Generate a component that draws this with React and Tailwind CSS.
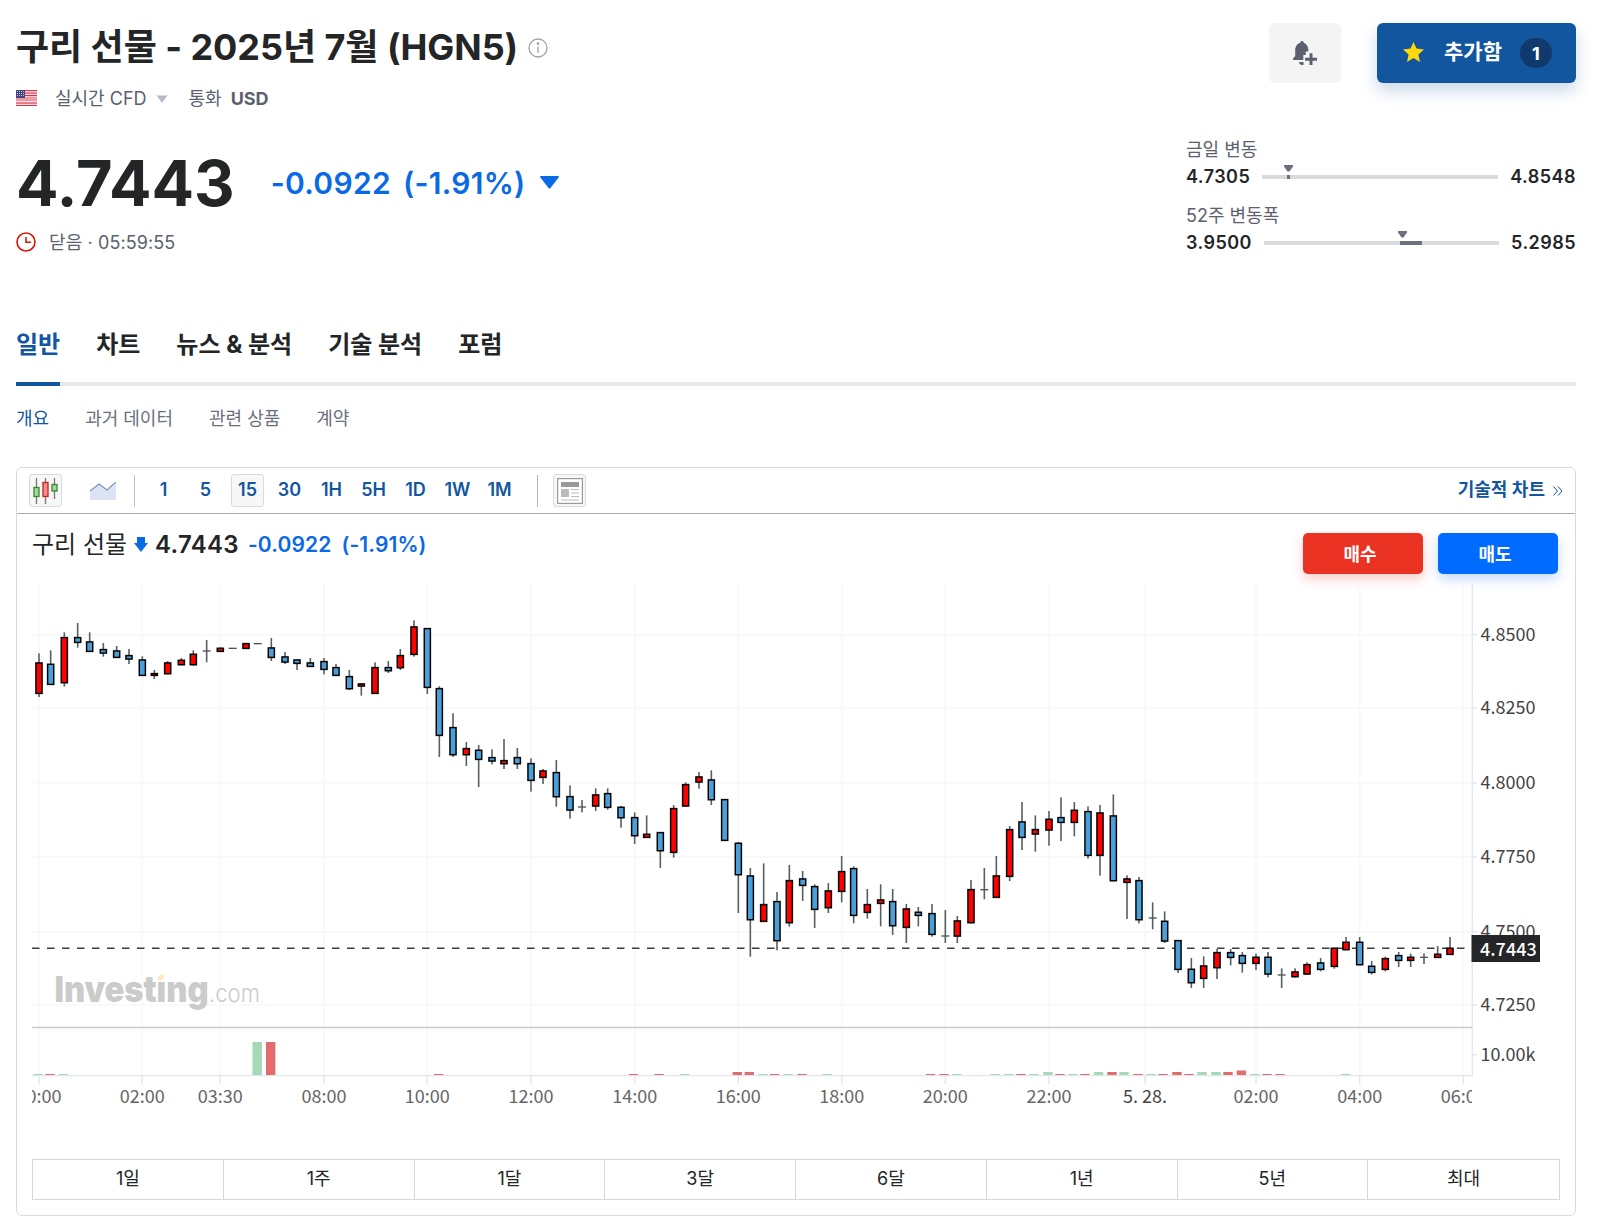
import React from "react";
import clsx from "clsx";

const TABS = ["일반", "차트", "뉴스 & 분석", "기술 분석", "포럼"];
const SUB_TABS = ["개요", "과거 데이터", "관련 상품", "계약"];
const INTERVALS = ["1", "5", "15", "30", "1H", "5H", "1D", "1W", "1M"];
const RANGES = ["1일", "1주", "1달", "3달", "6달", "1년", "5년", "최대"];

// === CHART DATA ===
// each candle: [x, high, bodyTop, bodyBottom, low, up], in thirds of a pixel
// relative to the dx / dy of its segment. bodyBottom null = doji
const SEGMENTS = [
  {
    dx: 60,
    dy: 1800,
    candles: [
      [57, 160, 187, 282, 291, 1], [92, 151, 191, 255, 255, 0], [133, 97, 111, 250, 260, 1],
      [173, 69, 111, 129, 143, 0], [209, 97, 124, 156, 156, 0], [250, 129, 147, 161, 170, 0],
      [290, 138, 151, 174, 174, 0], [327, 147, 165, 179, 192, 0], [367, 169, 178, 228, 228, 0],
      [403, 210, 219, 228, 237, 1], [443, 183, 187, 223, 223, 1], [484, 174, 179, 196, 196, 1],
      [520, 151, 161, 196, 197, 1], [560, 120, 153, null, 187, 1], [601, 142, 143, 156, 156, 1],
      [638, 145, 145, null, 145, 1], [678, 129, 129, 147, 147, 1], [713, 131, 131, null, 131, 1],
      [754, 114, 142, 174, 183, 0], [795, 156, 169, 188, 192, 0],
    ],
  },
  {
    dx: 840,
    dy: 1800,
    candles: [
      [51, 178, 178, 192, 210, 0], [91, 174, 187, 201, 201, 0], [132, 174, 183, 210, 223, 0],
      [168, 192, 201, 228, 228, 0], [208, 210, 228, 268, 270, 0], [244, 250, 250, 260, 287, 1],
      [285, 187, 201, 282, 282, 1], [325, 183, 201, 214, 219, 0], [361, 147, 165, 205, 210, 1],
      [402, 61, 79, 165, 170, 1], [442, 84, 84, 264, 282, 0], [478, 259, 264, 408, 471, 0],
      [519, 340, 381, 466, 471, 0], [559, 426, 444, 466, 498, 1], [596, 435, 449, 480, 561, 0],
      [636, 448, 471, 485, 493, 0], [672, 417, 480, 493, 507, 1], [712, 444, 471, 493, 507, 0],
      [753, 475, 489, 543, 575, 0], [789, 507, 511, 534, 552, 1],
    ],
  },
  {
    dx: 1620,
    dy: 2160,
    candles: [
      [49, 120, 156, 232, 260, 0], [90, 196, 228, 272, 296, 0], [126, 240, 261, null, 277, 1],
      [167, 205, 223, 260, 273, 1], [203, 205, 219, 264, 269, 0], [243, 258, 260, 295, 323, 0],
      [284, 277, 291, 349, 372, 0], [320, 286, 341, 354, 354, 1], [361, 336, 336, 394, 444, 0],
      [401, 255, 264, 399, 413, 1], [437, 187, 192, 260, 260, 1], [477, 156, 169, 188, 206, 1],
      [514, 151, 178, 241, 255, 0], [554, 237, 237, 363, 363, 0], [595, 366, 368, 466, 579, 0],
      [631, 444, 466, 601, 710, 0], [671, 430, 552, 606, 606, 1], [711, 516, 543, 664, 691, 0],
      [748, 435, 480, 610, 620, 1], [788, 453, 475, 498, 543, 0], [824, 493, 498, 570, 624, 0],
    ],
  },
  {
    dx: 2400,
    dy: 2280,
    candles: [
      [85, 369, 391, 445, 459, 1], [125, 288, 333, 396, 427, 1], [161, 319, 324, 468, 490, 0],
      [202, 387, 432, 459, 476, 1], [242, 373, 418, 432, 499, 1], [278, 387, 423, 499, 525, 0],
      [319, 432, 445, 504, 549, 1], [355, 441, 455, 468, 499, 0], [396, 432, 459, 525, 530, 0],
      [436, 450, 528, null, 549, 1], [472, 468, 481, 530, 549, 1], [513, 360, 387, 490, 490, 1],
      [553, 324, 389, null, 418, 1], [589, 288, 346, 414, 414, 1], [629, 198, 207, 351, 363, 1],
      [666, 126, 184, 234, 270, 0], [706, 166, 207, 224, 275, 1], [747, 153, 176, 212, 257, 1],
      [783, 112, 171, 189, 243, 0], [823, 126, 149, 189, 229, 1],
    ],
  },
  {
    dx: 3180,
    dy: 2340,
    candles: [
      [84, 79, 93, 228, 236, 0], [120, 75, 97, 228, 287, 1], [160, 43, 106, 304, 304, 0],
      [201, 286, 295, 309, 417, 1], [237, 291, 300, 421, 430, 0], [278, 367, 414, null, 448, 1],
      [314, 394, 422, 485, 489, 0], [354, 480, 480, 570, 579, 0], [394, 534, 566, 610, 624, 0],
      [431, 529, 556, 597, 624, 1], [471, 507, 516, 565, 597, 1], [512, 507, 516, 534, 556, 0],
      [547, 516, 525, 552, 578, 0], [588, 521, 530, 552, 570, 1], [624, 516, 530, 584, 592, 0],
      [665, 565, 585, null, 624, 1], [705, 565, 574, 592, 592, 1], [741, 547, 552, 584, 584, 1],
      [782, 534, 547, 570, 574, 0], [823, 502, 503, 561, 566, 1],
    ],
  },
  {
    dx: 3960,
    dy: 2700,
    candles: [
      [78, 111, 125, 151, 151, 1], [119, 111, 125, 196, 196, 0], [155, 183, 197, 219, 223, 0],
      [196, 170, 174, 210, 214, 1], [236, 156, 165, 183, 201, 0], [272, 161, 170, 183, 201, 1],
      [312, 160, 172, null, 192, 1], [353, 138, 161, 174, 174, 1], [390, 111, 143, 165, 165, 1],
    ],
  },
];

// [center x, height, up]
const VOLUMES = [
  [38, 1, 1], [50, 1, 0], [63.5, 1, 1], [257.2, 33, 1], [270.7, 33, 0], [438.7, 1, 0],
  [633.5, 1, 0], [659, 1, 0], [684.5, 1, 1], [737.3, 3, 0], [749.3, 3, 0], [763, 1, 1],
  [774.5, 1, 0], [788, 1, 1], [802, 1, 0], [827, 1, 1], [930.5, 1, 0], [944, 1, 0],
  [956.7, 1, 1], [995, 1, 1], [1008.6, 1, 1], [1021, 1, 0], [1034, 1, 1], [1048, 3, 1],
  [1060, 1, 0], [1073, 1, 1], [1085, 1, 0], [1098.6, 3, 1], [1112, 3, 0], [1124, 3, 1],
  [1138, 1, 0], [1151, 1, 1], [1163, 1, 0], [1177, 3, 0], [1189, 1, 0], [1202, 3, 1],
  [1216, 3, 1], [1228, 3, 0], [1241.4, 4.5, 0], [1255, 1, 1], [1267, 1, 0], [1280, 1, 0],
  [1345.5, 1, 1],
];

const X_TICKS = [
  [39, "00:00"], [142.3, "02:00"], [220.3, "03:30"], [324, "08:00"], [427.3, "10:00"],
  [531, "12:00"], [634.7, "14:00"], [738.3, "16:00"], [841.7, "18:00"], [945.3, "20:00"],
  [1049, "22:00"], [1145, "5. 28."], [1256, "02:00"], [1359.7, "04:00"], [1463.3, "06:00"],
];

const Y_TICKS = [
  [634.7, "4.8500"], [708, "4.8250"], [783, "4.8000"],
  [856.7, "4.7750"], [931.7, "4.7500"], [1005, "4.7250"],
];

const Candle = ({ data }) => {
  const [x, high, top, bottom, low, up] = data;
  return (
    <g>
      {low > high && <rect x={x - 2.4} y={high} width="4.8" height={low - high} fill="#556163" />}
      {bottom === null ? (
        <rect x={x - 12} y={top - 2} width="24" height="4" fill="#4a5557" />
      ) : (
        <rect
          x={x - 9.2}
          y={top + 1.8}
          width="18.4"
          height={Math.max(bottom - top - 3.6, 4)}
          fill={up ? "#ff0000" : "#4a9fd8"}
          stroke="#000"
          strokeWidth="4.4"
        />
      )}
    </g>
  );
};

const PriceChart = () => (
  <svg
    width="1528"
    height="530"
    viewBox="32 583 1528 530"
    className="block font-['Noto_Sans_CJK_KR',sans-serif] text-[18px]"
  >
    <defs>
      <clipPath id="plot">
        <rect x="32" y="583" width="1440" height="530" />
      </clipPath>
    </defs>

    {/* grid */}
    <g stroke="#f8f8f8" strokeWidth="1.6">
      {X_TICKS.map(([x], i) => (
        <line key={i} x1={x} x2={x} y1="583" y2="1075" />
      ))}
      {Y_TICKS.map(([y]) => (
        <line key={y} x1="32" x2="1472" y1={y} y2={y} />
      ))}
    </g>

    {/* watermark */}
    <g fill="#cbcbcb" className="font-['Inter',sans-serif]">
      <text x="54.5" y="1002" textLength="154" lengthAdjust="spacingAndGlyphs" className="text-[36px] font-black">
        Investıng
      </text>
      <path d="M158 976l6-2v5l-6 2z" fill="#ffe9c2" />
      <text x="209" y="1002" textLength="51" lengthAdjust="spacingAndGlyphs" className="text-[25px] font-light">
        .com
      </text>
    </g>

    {/* axes */}
    <g stroke="#e2e6ed" strokeWidth="1.4">
      <line x1="1472.3" x2="1472.3" y1="583" y2="1076" />
      <line x1="32" x2="1473" y1="1075.6" y2="1075.6" />
      {X_TICKS.map(([x], i) => (
        <line key={i} x1={x} x2={x} y1="1076" y2="1084" />
      ))}
      {Y_TICKS.map(([y]) => (
        <line key={y} x1="1472" x2="1477" y1={y} y2={y} />
      ))}
      <line x1="1472" x2="1477" y1="1054.7" y2="1054.7" />
    </g>
    <line x1="32" x2="1472" y1="1027.5" y2="1027.5" stroke="#c9cacb" strokeWidth="1.6" />

    <line x1="32" x2="1466" y1="948.3" y2="948.3" stroke="#3c3c3c" strokeWidth="1.4" strokeDasharray="7.5 7.5" />

    {VOLUMES.map(([x, h, up]) => (
      <rect key={x} x={x - 4.7} y={1075 - h} width="9.4" height={h} fill={up ? "#a4d8b6" : "#e26b6e"} />
    ))}

    <g transform="scale(0.333333)">
      {SEGMENTS.map(({ dx, dy, candles }) => (
        <g key={dx} transform={`translate(${dx} ${dy})`}>
          {candles.map((c) => (
            <Candle key={c[0]} data={c} />
          ))}
        </g>
      ))}
    </g>

    {/* labels */}
    <g clipPath="url(#plot)" textAnchor="middle" fill="#666">
      {X_TICKS.map(([x, label], i) => (
        <text key={i} x={x} y="1103" fill={label === "5. 28." ? "#444" : "#666"}>
          {label}
        </text>
      ))}
    </g>
    <g fill="#444">
      {Y_TICKS.map(([y, label]) => (
        <text key={y} x="1480.5" y={y + 6}>
          {label}
        </text>
      ))}
      <text x="1480.5" y="1061">10.00k</text>
    </g>
    <rect x="1471.5" y="935" width="68.5" height="27" fill="#232526" />
    <text x="1480" y="955.5" fill="#fff" className="font-medium">4.7443</text>
  </svg>
);

const Flag = () => (
  <svg width="21" height="16" viewBox="0 0 21 16">
    <rect width="21" height="16" fill="#f6dfe2" />
    <rect y="7" width="21" height="4" fill="#ef9aa3" />
    {[0, 2.5, 5, 12.5, 15].map((y) => (
      <rect key={y} y={y} width="21" height="1.1" fill="#d8334a" />
    ))}
    <rect width="9" height="8" fill="#46467f" />
    {[1.5, 3.5, 5.5].map((y) => (
      <path key={y} d={`M1 ${y}h7`} stroke="#d5d5e6" strokeWidth="0.8" strokeDasharray="1 1" />
    ))}
  </svg>
);

const RangeBar = ({ label, low, high, marker, from, width, gap }) => (
  <div>
    <div className="flex h-[26px] items-center text-[18px] text-[#5b616e]">{label}</div>
    <div className="mt-px flex h-7 items-center justify-between text-[18px] font-semibold leading-7 text-[#232526]">
      <span className="tracking-[0.45px]">{low}</span>
      <div className={clsx("relative h-1 bg-[#d9dade]", gap)}>
        <div className="absolute h-1 bg-[#6a707c]" style={{ left: from, width }} />
        <svg className="absolute -top-[10px]" style={{ left: marker }} width="9" height="7" viewBox="0 0 9 7">
          <path d="M0 0h9v1.5L5.5 6.5h-2L0 1.5z" fill="#6a707c" />
        </svg>
      </div>
      <span className="tracking-[0.45px]">{high}</span>
    </div>
  </div>
);

const Header = () => (
  <header className="flex h-[257px] justify-between">
    <div className="pt-[25px]">
      <div className="flex h-11 items-center">
        <h1 className="whitespace-nowrap text-[36px] font-bold leading-[44px] tracking-[-0.05px] text-[#232526]">구리 선물 - 2025년 7월 (HGN5)</h1>
        <svg className="ml-[10px] mt-px" width="20" height="20" viewBox="0 0 20 20" fill="none" stroke="#a0a2a6" strokeWidth="1.3">
          <circle cx="10" cy="10" r="9" />
          <path d="M10 8.5v6.5" />
          <circle cx="10" cy="5.6" r="0.7" fill="#a0a2a6" />
        </svg>
      </div>

      <div className="mt-[15px] flex h-7 items-center whitespace-nowrap text-[18px] text-[#5b616e]">
        <Flag />
        <span className="ml-[18px]">실시간 CFD</span>
        <svg className="ml-[9px] mt-0.5" width="12" height="8" viewBox="0 0 12 8">
          <path d="M0.5 0.5h11L6 7.800z" fill="#b5bac6" />
        </svg>
        <span className="ml-[21px]">통화</span>
        <span className="ml-[9px] font-bold">USD</span>
      </div>

      <div className="mt-[39px] flex h-16 items-center whitespace-nowrap">
        <div className="text-[63px] font-bold leading-[64px] text-[#232526]">4.7443</div>
        <div className="ml-9 flex items-center gap-3 text-[30px] font-semibold tracking-[0.3px] text-[#0a69e5]">
          <span>-0.0922</span>
          <span>(-1.91%)</span>
        </div>
        <svg className="-mt-0.5 ml-[14px]" width="19" height="13" viewBox="0 0 19 13">
          <path d="M1 0h17q1.5 0 .6 1.5L10.5 12q-1 1-2 0L.4 1.500Q-.5 0 1 0z" fill="#0a69e5" />
        </svg>
      </div>

      <div className="mt-[13px] flex h-7 items-center gap-[13px] text-[18px] text-[#5b616e]">
        <svg width="20" height="20" viewBox="0 0 20 20" fill="none" stroke="#d91400" strokeWidth="1.6">
          <circle cx="10" cy="10" r="9" />
          <path d="M10 5v5.300h5" />
        </svg>
        <span className="tracking-[0.1px]">닫음 · 05:59:55</span>
      </div>
    </div>

    <div className="flex flex-col items-end pt-[23px]">
      <div className="flex gap-9">
        <button className="flex h-[60px] w-[72px] items-center justify-center rounded-md bg-[#f4f4f4]">
          <svg width="24" height="24" viewBox="0 0 24 24" fill="#5b616e">
            <path d="M9 0c1 0 1.700.7 1.700 1.700C13.500 2.500 15 5 15.300 8.500V10.500h-2.500V14H10.300v5H0v-1.500l2.200-2.500V9.500C2.200 5.500 4 2.500 7.300 1.700 7.300.7 8 0 9 0z" />
            <path d="M6 21h4.500v3.300C8 24.300 6 23 6 21z" />
            <path d="M16.500 12.200h3v4.500H24v3h-4.500V24h-3v-4.300H12v-3h4.500z" />
          </svg>
        </button>
        <button className="flex h-[60px] w-[199px] items-center rounded-md bg-[#1256a0] pl-[26px] text-white shadow-[0_8px_16px_rgba(18,86,160,0.22)]">
          <svg className="-mt-0.5" width="21" height="20" viewBox="0 0 21 20">
            <path d="M10.500 0l3 6.600 7.500.8-5.600 5 1.600 7.600-6.500-3.900L4 20l1.600-7.600L0 7.400l7.500-.8z" fill="#ffd80c" />
          </svg>
          <span className="-mt-0.5 ml-5 text-[21px] font-bold">추가함</span>
          <span className="ml-[18px] flex h-[30px] w-8 items-center justify-center rounded-full bg-[#103a6d] text-[18px] font-bold">1</span>
        </button>
      </div>

      <div className="mt-[53px] flex w-[390px] flex-col gap-[11px]">
        <RangeBar label="금일 변동" low="4.7305" high="4.8548" marker={22} from={25} width={3} gap="w-[236px]" />
        <RangeBar label="52주 변동폭" low="3.9500" high="5.2985" marker={134} from={136} width={22} gap="w-[235px]" />
      </div>
    </div>
  </header>
);

const Toolbar = () => (
  <div className="flex h-[46px] items-center border-b border-[#a8a9ab] pl-3 pr-3 text-[18px] font-semibold text-[#1256a0]">
    <div className="flex h-[33px] w-[33px] items-center justify-center rounded-[3px] border border-[#dadbde] bg-[#f7f7f7]">
      <svg width="25" height="26" viewBox="0 0 25 26" strokeWidth="1.3">
        <path d="M3.500 0v26M12.500 0v26M21.500 0v21" stroke="#777" />
        <rect x="1" y="9.500" width="5" height="9" fill="#a5d6a0" stroke="#2f8a2c" />
        <rect x="10" y="4.500" width="5" height="14" fill="#f48a8a" stroke="#c22525" />
        <rect x="19" y="6.500" width="5" height="6.500" fill="#a5d6a0" stroke="#2f8a2c" />
      </svg>
    </div>
    <svg className="ml-7" width="26" height="18" viewBox="0 0 26 18">
      <path d="M0 9l9-7 8 6 9-8v18H0z" fill="#dbe3f4" />
      <path d="M0 9l9-7 8 6 9-8" fill="none" stroke="#7896bd" strokeWidth="1.2" />
    </svg>
    <div className="ml-[18px] h-8 w-px bg-[#c0c1c4]" />
    <div className="ml-3 flex gap-[9px]">
      {INTERVALS.map((item) => (
        <div
          key={item}
          className={clsx(
            "flex h-[33px] w-[33px] items-center justify-center rounded-[3px] border pb-0.5",
            item === "15" ? "border-[#dadbde] bg-[#f7f7f7]" : "border-transparent"
          )}
        >
          {item}
        </div>
      ))}
    </div>
    <div className="ml-[21px] h-8 w-px bg-[#b5b6b9]" />
    <div className="ml-[15px] flex h-[33px] w-[33px] items-center justify-center rounded-[3px] border border-[#dadbde] bg-[#f7f7f7]">
      <svg width="26" height="26" viewBox="0 0 26 26" fill="none" stroke="#999">
        <rect x="0.500" y="0.500" width="25" height="25" fill="#fff" strokeWidth="1.4" />
        <path d="M4 6.500h18" stroke="#999" strokeWidth="5" />
        <path d="M4 15h8" stroke="#bbb" strokeWidth="8" />
        <path d="M14 11.500h8M14 15h8M14 18.500h8M4 22h18" strokeWidth="1.2" stroke="#bbb" />
      </svg>
    </div>
    <div className="ml-auto flex items-center gap-2">
      <span className="pb-0.5">기술적 차트</span>
      <svg width="10" height="10" viewBox="0 0 10 10" fill="none" stroke="#1256a0" strokeWidth="1">
        <path d="M0.500 0.500L4.500 5l-4 4.500M5 0.500L9 5 5 9.500" />
      </svg>
    </div>
  </div>
);

const ChartCard = () => (
  <section className="mt-[35px] h-[749px] rounded-md border border-[#dadbde]">
    <Toolbar />
    <div className="flex h-[69px] justify-between pl-[15px] pr-[17px]">
      <div className="flex h-[61px] items-center whitespace-nowrap text-[#232526]">
        <span className="text-[24px]">구리 선물</span>
        <svg className="ml-[7px]" width="14" height="15" viewBox="0 0 14 15">
          <path d="M3 0h8v6h3L7 15 0 6h3z" fill="#0a69e5" />
        </svg>
        <span className="ml-[7px] text-[24px] font-semibold tracking-[0.3px]">4.7443</span>
        <span className="ml-[9px] text-[21px] font-semibold tracking-[0.15px] text-[#0a69e5]">-0.0922</span>
        <span className="ml-[10px] text-[21px] font-semibold tracking-[0.1px] text-[#0a69e5]">(-1.91%)</span>
      </div>
      <div className="flex gap-[15px] pt-[19px] text-[18px] font-bold text-white">
        <button className="h-[41px] w-[120px] rounded-[5px] bg-[#ea3323] pr-1.5 pt-px shadow-[0_5px_12px_rgba(234,51,35,0.25)]">매수</button>
        <button className="h-[41px] w-[120px] rounded-[5px] bg-[#006bff] pr-1.5 pt-px shadow-[0_5px_12px_rgba(0,107,255,0.25)]">매도</button>
      </div>
    </div>
    <div className="pl-[15px]">
      <PriceChart />
    </div>
    <div className="mx-[15px] mt-[46px] grid h-[41px] grid-cols-8 divide-x divide-[#d6d7d9] border border-[#d6d7d9] text-[18px] text-[#232526]">
      {RANGES.map((r) => (
        <div key={r} className="flex items-center justify-center pb-0.5">
          {r}
        </div>
      ))}
    </div>
  </section>
);

const App = () => {
  return (
    <div className="h-[1226px] w-[1619px] overflow-hidden bg-white pl-4 pr-[43px] font-['Inter','Noto_Sans_CJK_KR',sans-serif]">
      <Header />

      {/* tabs */}
      <nav className="mt-[74px] flex h-[55px] gap-9 border-b-4 border-[#e7e7e7] text-[24px] font-bold leading-7 text-[#232526]">
        {TABS.map((tab, i) => (
          <div key={tab} className={clsx("h-[55px] whitespace-nowrap", i === 0 && "border-b-4 border-[#1256a0] text-[#1256a0]")}>
            {tab}
          </div>
        ))}
      </nav>
      <div className="mt-[18px] flex h-7 items-center gap-9 text-[18px] text-[#6a707c]">
        {SUB_TABS.map((tab, i) => (
          <span key={tab} className={clsx(i === 0 && "text-[#1256a0]")}>
            {tab}
          </span>
        ))}
      </div>

      <ChartCard />
    </div>
  );
};

export default App;
